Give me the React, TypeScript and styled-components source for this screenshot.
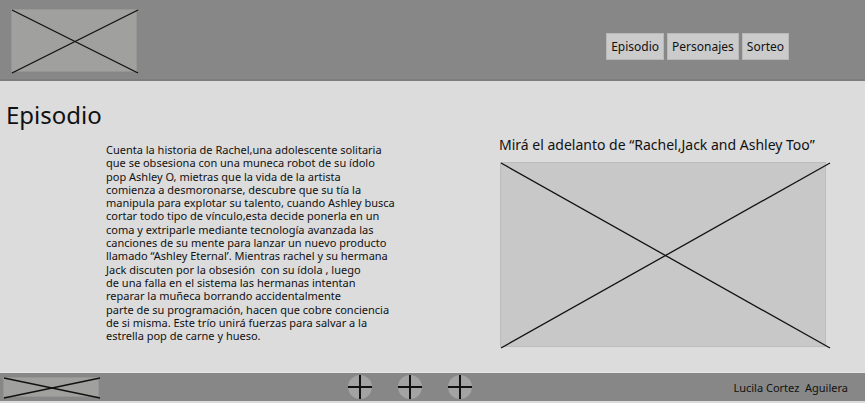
import * as React from "react"
import styled, { createGlobalStyle } from "styled-components"

const GlobalStyle = createGlobalStyle`
  *, *::before, *::after {
    box-sizing: border-box;
  }

  html, body {
    margin: 0;
    padding: 0;
    background: #dcdcdc;
    font-family: "Noto Sans", "Open Sans", sans-serif;
    color: #111;
  }
`

const Page = styled.div`
  width: 865px;
  height: 401px;
  display: flex;
  flex-direction: column;
`

const Header = styled.header`
  height: 81px;
  flex: none;
  display: flex;
  align-items: flex-start;
  background: #878787;
  border-bottom: 2px solid #7d7d7d;
  padding: 9px 76px 0 11px;
`

const Nav = styled.nav`
  display: flex;
  gap: 3px;
  margin-top: 24px;
  margin-left: auto;
`

const NavButton = styled.a`
  height: 27px;
  display: flex;
  align-items: center;
  padding: 0 4px;
  background: #cbcbcb;
  border: 1px solid #b9b9b9;
  font-size: 12px;
  color: #111;
  text-decoration: none;
`

const Main = styled.main`
  flex: 1;
  display: flex;
  border-bottom: 1px solid #e6e6e6;
`

const LeftColumn = styled.section`
  width: 499px;
  padding-left: 6px;
`

const Title = styled.h1`
  margin: 17px 0 0;
  font-size: 24px;
  font-weight: 400;
  line-height: normal;
`

const Story = styled.p`
  margin: 12px 0 0 100px;
  font-size: 11px;
  line-height: 13.3px;
  white-space: pre;
`

const RightColumn = styled.section`
  flex: 1;
  padding-top: 54px;
`

const TrailerTitle = styled.h2`
  margin: 0 0 8px;
  font-size: 14px;
  font-weight: 400;
  line-height: normal;
`

const Placeholder = styled.div<{ $w: number; $h: number; $fill: string }>`
  width: ${(p) => p.$w}px;
  height: ${(p) => p.$h}px;
  flex: none;
  background: ${(p) => p.$fill};
  border: 1px solid rgba(0, 0, 0, 0.06);
  position: relative;

  svg {
    position: absolute;
    inset: 0;
    overflow: visible;
  }
`

const Trailer = styled(Placeholder)`
  margin-left: 1px;
`

const Footer = styled.footer`
  height: 28px;
  flex: none;
  display: flex;
  align-items: center;
  background: #878787;
  padding: 0 17px 0 3px;
`

const Social = styled.div`
  display: flex;
  gap: 26px;
  margin-left: 249px;
`

const SocialIcon = styled.span`
  width: 24px;
  height: 24px;
  border-radius: 50%;
  background: #a3a3a3;
  position: relative;

  &::before,
  &::after {
    content: "";
    position: absolute;
    background: #111;
  }

  &::before {
    left: 0;
    right: 0;
    top: 11px;
    height: 1.5px;
  }

  &::after {
    top: 0;
    bottom: 0;
    left: 11px;
    width: 2px;
  }
`

const Credit = styled.span`
  margin-left: auto;
  font-size: 11px;
  white-space: pre;
`

const Cross = ({ w, h, over = 0 }: { w: number; h: number; over?: number }) => (
  <svg width={w} height={h}>
    <line x1={0} y1={0} x2={w + over} y2={h} stroke="#111" strokeWidth={1.3} />
    <line x1={0} y1={h} x2={w + over} y2={0} stroke="#111" strokeWidth={1.3} />
  </svg>
)

const story = [
  "Cuenta la historia de Rachel,una adolescente solitaria",
  "que se obsesiona con una muneca robot de su ídolo",
  "pop Ashley O, mietras que la vida de la artista",
  "comienza a desmoronarse, descubre que su tía la",
  "manipula para explotar su talento, cuando Ashley busca",
  "cortar todo tipo de vínculo,esta decide ponerla en un",
  "coma y extriparle mediante tecnología avanzada las",
  "canciones de su mente para lanzar un nuevo producto",
  "llamado “Ashley Eternal’. Mientras rachel y su hermana",
  "Jack discuten por la obsesión  con su ídola , luego",
  "de una falla en el sistema las hermanas intentan",
  "reparar la muñeca borrando accidentalmente",
  "parte de su programación, hacen que cobre conciencia",
  "de si misma. Este trío unirá fuerzas para salvar a la",
  "estrella pop de carne y hueso.",
]

const App: React.FC = () => (
  <Page>
    <GlobalStyle />
    <Header>
      <Placeholder $w={126} $h={63} $fill="#a0a09f">
        <Cross w={126} h={63} />
      </Placeholder>
      <Nav>
        <NavButton href="#">Episodio</NavButton>
        <NavButton href="#">Personajes</NavButton>
        <NavButton href="#">Sorteo</NavButton>
      </Nav>
    </Header>

    <Main>
      <LeftColumn>
        <Title>Episodio</Title>
        <Story>
          {story.map((line, i) => (
            <React.Fragment key={i}>
              {line}
              {i < story.length - 1 && <br />}
            </React.Fragment>
          ))}
        </Story>
      </LeftColumn>

      <RightColumn>
        <TrailerTitle>Mirá el adelanto de “Rachel,Jack and Ashley Too”</TrailerTitle>
        <Trailer $w={326} $h={185} $fill="#c9c8c8">
          <Cross w={326} h={185} over={3} />
        </Trailer>
      </RightColumn>
    </Main>

    <Footer>
      <Placeholder $w={96} $h={20} $fill="#a0a09f">
        <Cross w={96} h={20} />
      </Placeholder>
      <Social>
        <SocialIcon />
        <SocialIcon />
        <SocialIcon />
      </Social>
      <Credit>Lucila Cortez  Aguilera</Credit>
    </Footer>
  </Page>
)

export default App
